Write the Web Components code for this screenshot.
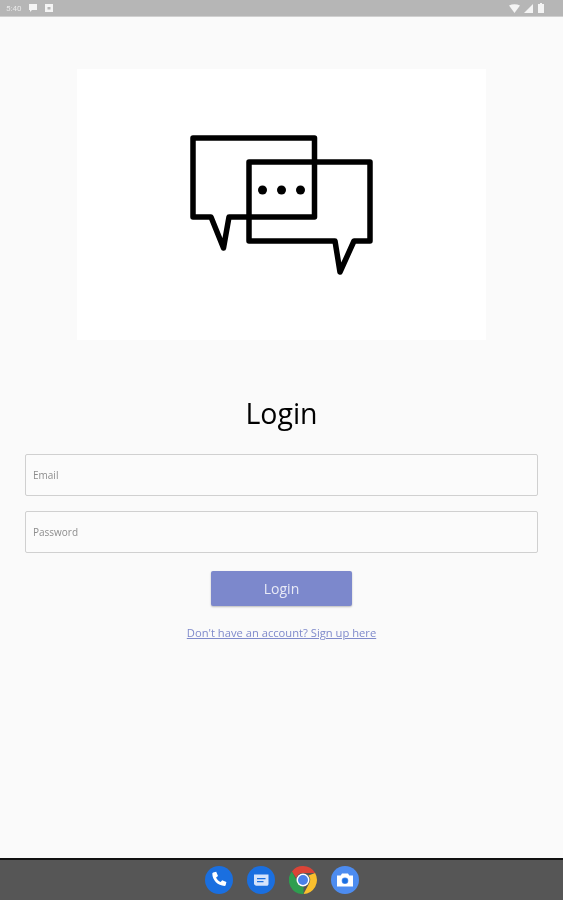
<!DOCTYPE html>
<html>
<head>
<meta charset="utf-8">
<style>
  html, body { margin: 0; height: 100%; }
  body { display: flex; flex-direction: column; height: 900px; overflow: hidden; font-family: "Open Sans", "Noto Sans", sans-serif; filter: blur(.4px); }
</style>
</head>
<body>
<status-bar></status-bar>
<login-page>
  <chat-logo></chat-logo>
  <h1 slot="title">Login</h1>
  <login-field label="Email"></login-field>
  <login-field label="Password"></login-field>
  <login-button>Login</login-button>
  <a slot="link" href="#">Don't have an account? Sign up here</a>
</login-page>
<app-dock></app-dock>
<script>
class StatusBar extends HTMLElement {
  constructor() {
    super();
    this.attachShadow({ mode: 'open' }).innerHTML = `
<style>
  :host { display: flex; flex: none; height: 16px; background: #b6b6b6; align-items: center; justify-content: space-between; padding: 0 19px 0 6px; border-bottom: 1px solid #d0d0d0; color: #f4f4f4; font: 8px "Roboto", sans-serif; }
  .group { display: flex; align-items: center; gap: 6px; }
  .time { margin-right: 1px; opacity: .8; }
  svg { display: block; fill: #f4f4f4; }
</style>
<div class="group">
  <span class="time">5:40</span>
  <svg width="10" height="10" viewBox="0 0 10 10"><path d="M1 1h8v6H4L2 9V7H1z"/></svg>
  <svg width="10" height="10" viewBox="0 0 10 10"><path fill-rule="evenodd" d="M1 1h8v8H1zM3.500 4v2.500h3V4z"/></svg>
</div>
<div class="group" style="gap:4px">
  <svg width="11" height="9" viewBox="0 0 11 9"><path d="M0 1.500Q5.500-1 11 1.500L5.500 9z"/></svg>
  <svg width="10" height="9" viewBox="0 0 10 9"><path d="M9 0v9H0z"/></svg>
  <svg width="6" height="10" viewBox="0 0 6 10"><path d="M2 0h2v1h2v9H0V1h2z"/></svg>
</div>`;
  }
}
customElements.define('status-bar', StatusBar);

class LoginPage extends HTMLElement {
  constructor() {
    super();
    this.attachShadow({ mode: 'open' }).innerHTML = `
<style>
  :host { display: flex; flex: 1; flex-direction: column; align-items: center; background: #fafafa; padding: 52px 25px 0; box-sizing: border-box; }
  ::slotted(h1) { margin: 52px 0 20px; font: 400 28.500px/42px "Open Sans", sans-serif; color: #000; }
  ::slotted(a) { margin-top: 19px; font-size: 11.200px; line-height: 16px; color: #7f8acb; }
  .fields { display: flex; flex-direction: column; gap: 15px; align-self: stretch; margin-bottom: 18px; }
</style>
<slot></slot>
<slot name="title"></slot>
<div class="fields"><slot name="fields"></slot></div>
<slot name="button"></slot>
<slot name="link"></slot>`;
  }
  connectedCallback() {
    this.querySelectorAll('login-field').forEach(f => f.slot = 'fields');
    this.querySelector('login-button').slot = 'button';
  }
}
customElements.define('login-page', LoginPage);

class ChatLogo extends HTMLElement {
  constructor() {
    super();
    this.attachShadow({ mode: 'open' }).innerHTML = `
<style>
  :host { display: block; width: 409px; height: 271px; background: #fff; }
  svg { display: block; }
  path { fill: none; stroke: #000; stroke-width: 5.500; stroke-linejoin: round; stroke-linecap: round; }
  circle { fill: #000; }
</style>
<svg width="409" height="271" viewBox="77 69 409 271">
  <path d="M193 138H314.500V217H229L223.500 248L211 217H193Z"/>
  <path d="M249 162H370V241H354L340 272L335 241H249Z"/>
  <circle cx="262.500" cy="190" r="4.500"/>
  <circle cx="281.500" cy="190" r="4.500"/>
  <circle cx="300.500" cy="190" r="4.500"/>
</svg>`;
  }
}
customElements.define('chat-logo', ChatLogo);

class LoginField extends HTMLElement {
  constructor() {
    super();
    this.attachShadow({ mode: 'open' }).innerHTML = `
<style>
  :host { display: flex; align-items: center; height: 42px; box-sizing: border-box; border: 1px solid #d0d0d0; border-radius: 2px; padding: 0 7px; background: #fbfbfb; color: #8d8d8d; font-size: 10px; }
</style>
<span></span>`;
  }
  connectedCallback() {
    this.shadowRoot.querySelector('span').textContent = this.getAttribute('label');
  }
}
customElements.define('login-field', LoginField);

class LoginButton extends HTMLElement {
  constructor() {
    super();
    this.attachShadow({ mode: 'open' }).innerHTML = `
<style>
  :host { display: flex; align-items: center; justify-content: center; width: 141px; height: 35px; background: #7c88cc; border-radius: 2px; box-shadow: 0 1px 2px rgba(0,0,0,.25); color: #e8eaf6; font-size: 14px; }
</style>
<slot></slot>`;
  }
}
customElements.define('login-button', LoginButton);

class AppDock extends HTMLElement {
  constructor() {
    super();
    this.attachShadow({ mode: 'open' }).innerHTML = `
<style>
  :host { display: flex; flex: none; height: 40px; box-sizing: content-box; border-top: 2px solid #111; background: #565656; align-items: center; justify-content: center; gap: 14px; }
  svg { display: block; width: 28px; height: 28px; }
</style>
<svg viewBox="0 0 28 28"><circle cx="14" cy="14" r="14" fill="#1a6fe0"/><path fill="#fff" d="M8.200 6.500l3-.7 1.800 4.200-1.900 1.600c.9 2 2.500 3.600 4.500 4.500l1.600-1.900 4.200 1.800-.7 3c-.1.500-.6.900-1.100.9C12.900 19.900 7.300 14.300 7.300 7.600c0-.5.400-1 .9-1.100z"/></svg>
<svg viewBox="0 0 28 28"><circle cx="14" cy="14" r="14" fill="#1a6fe0"/><path fill="#d5e3fb" d="M7 8.500h14.500v9.500c0 1-.8 1.800-1.800 1.800H9.500c-1.400 0-2.500-1.100-2.500-2.500z"/><path fill="#1a6fe0" d="M10 12h8.500v1.200H10zM10 15h6.500v1.200H10z"/></svg>
<svg viewBox="0 0 28 28"><path fill="#db4437" d="M14 0a14 14 0 0 1 12.100 7H14a7 7 0 0 0-6.700 5L2.900 5.400A14 14 0 0 1 14 0z"/><path fill="#fbc02d" d="M26.100 7A14 14 0 0 1 14.500 28l5.600-10.500A7 7 0 0 0 19.500 9.500z"/><path fill="#2e9e4f" d="M2.900 5.400l5.800 10.900A7 7 0 0 0 14 21l.5 0L14.500 28A14 14 0 0 1 2.900 5.400z"/><circle cx="14" cy="14" r="6.500" fill="#fff"/><circle cx="14" cy="14" r="5" fill="#4a80ea"/></svg>
<svg viewBox="0 0 28 28"><circle cx="14" cy="14" r="14" fill="#4d8cf0"/><path fill="#fff" fill-rule="evenodd" d="M11 7.500h6l1.300 2H22v11H6v-11h3.700zM14 11.500a3.300 3.300 0 1 0 0 6.600 3.300 3.300 0 0 0 0-6.600z"/><circle cx="14" cy="14.800" r="2.500" fill="#1a6fe0"/></svg>`;
  }
}
customElements.define('app-dock', AppDock);
</script>
</body>
</html>
